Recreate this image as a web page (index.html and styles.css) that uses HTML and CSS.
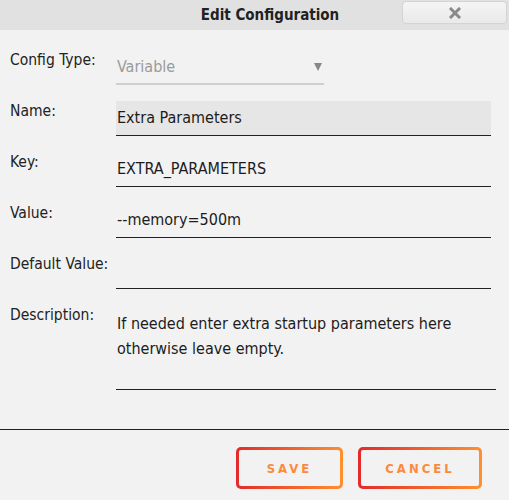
FILE: index.html
```html
<!DOCTYPE html>
<html>
<head>
  <title>Edit Configuration</title>
  <link rel="stylesheet" href="styles.css">
</head>
<body>
  <div class="dialog">
    <div class="titlebar">
      <span class="title">Edit Configuration</span>
      <button type="button" class="close" title="Close">
        <svg width="12" height="12" viewBox="0 0 12 12"><path d="M2 2 L10 10 M10 2 L2 10" stroke="#8a8a8a" stroke-width="3" stroke-linecap="square"/></svg>
      </button>
    </div>

    <form class="form" action="#" method="post">
      <label class="label" for="id_type">Config Type:</label>
      <div class="field field-select">
        <span class="select-value">Variable</span>
        <span class="arrow"></span>
      </div>

      <label class="label" for="id_name">Name:</label>
      <div class="field field-filled" id="id_name">Extra Parameters</div>

      <label class="label" for="id_key">Key:</label>
      <div class="field" id="id_key">EXTRA_PARAMETERS</div>

      <label class="label" for="id_value">Value:</label>
      <div class="field" id="id_value">--memory=500m</div>

      <label class="label" for="id_default">Default Value:</label>
      <div class="field" id="id_default"></div>

      <label class="label" for="id_desc">Description:</label>
      <div class="field field-area" id="id_desc">If needed enter extra startup parameters here otherwise leave empty.</div>
    </form>

    <div class="actions">
      <button type="button" class="btn btn-save">Save</button>
      <button type="button" class="btn btn-cancel">Cancel</button>
    </div>
  </div>
</body>
</html>
```

FILE: styles.css
```css
body {
  margin: 0;
  background: #f2f2f2;
  font-family: "DejaVu Sans Condensed", "DejaVu Sans", sans-serif;
  color: #1c1c1c;
}

.dialog {
  width: 509px;
}

.titlebar {
  position: relative;
  height: 30px;
  background: #e1e1e1;
  display: flex;
  align-items: center;
}

.title {
  flex: 1;
  text-align: center;
  padding-left: 31px;
  font-weight: bold;
  font-size: 15px;
  color: #222;
}

.close {
  position: absolute;
  top: 1px;
  right: 2px;
  width: 105px;
  height: 23px;
  border: 1px solid #d4d4d4;
  border-radius: 4px;
  background: linear-gradient(#f5f5f5, #e9e9e9);
  display: flex;
  align-items: center;
  justify-content: center;
  padding: 0;
}

.form {
  display: grid;
  grid-template-columns: 116px 1fr;
  row-gap: 16px;
  padding: 20px 18px 0 0;
  margin: 0;
}

.label {
  padding: 1px 0 0 10px;
  font-size: 15.5px;
  line-height: 18px;
  color: #222;
  white-space: nowrap;
}

.field {
  height: 34px;
  border-bottom: 1px solid #222;
  font-size: 16px;
  line-height: 34px;
  padding-left: 1px;
  box-sizing: content-box;
}

.field-select {
  width: 207px;
  border-bottom: 2px solid #cfcfcf;
  height: 33px;
  display: flex;
  justify-content: space-between;
  align-items: center;
  color: #9a9a9a;
}

.arrow {
  width: 0;
  height: 0;
  border-left: 4px solid transparent;
  border-right: 4px solid transparent;
  border-top: 8px solid #888;
  margin-right: 2px;
}

.field-filled {
  background: #e6e6e6;
}

.field-area {
  height: auto;
  min-height: 72px;
  line-height: 25px;
  padding-top: 6px;
  padding-bottom: 6px;
  margin-right: -5px;
}

.actions {
  margin-top: 39px;
  border-top: 1px solid #222;
  display: flex;
  justify-content: flex-end;
  gap: 15px;
  padding: 17px 27px 0 0;
}

.btn {
  height: 42px;
  border: 3px solid transparent;
  border-radius: 5px;
  background: linear-gradient(#f2f2f2, #f2f2f2) padding-box,
              linear-gradient(90deg, #e42a2c, #ff902e) border-box;
  color: #fb8a3c;
  font-family: "DejaVu Sans Condensed", "DejaVu Sans", sans-serif;
  font-weight: bold;
  font-size: 13px;
  letter-spacing: 3px;
  text-transform: uppercase;
  cursor: pointer;
}

.btn-save {
  width: 107px;
}

.btn-cancel {
  width: 124px;
}
```
